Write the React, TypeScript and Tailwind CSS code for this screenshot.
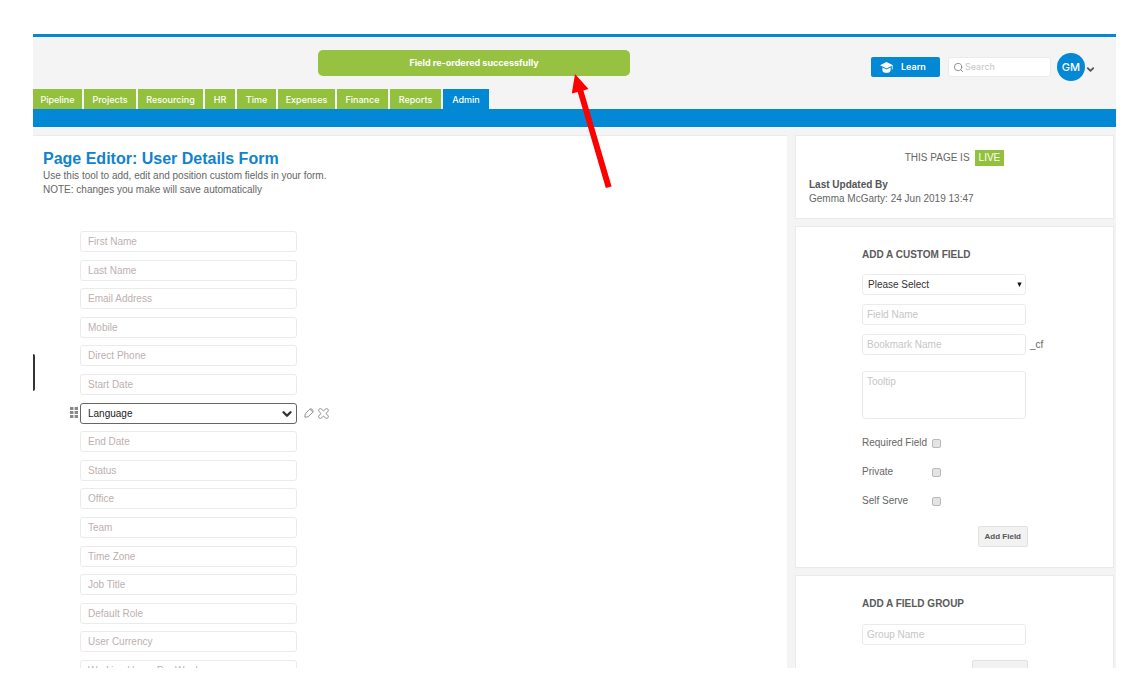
import { ChevronDown, Search } from "lucide-react";

const tabs = [
    { label: "Pipeline", width: "w-[49px]" },
    { label: "Projects", width: "w-[52px]" },
    { label: "Resourcing", width: "w-[65px]" },
    { label: "HR", width: "w-[30px]" },
    { label: "Time", width: "w-[39px]" },
    { label: "Expenses", width: "w-[57px]" },
    { label: "Finance", width: "w-[51px]" },
    { label: "Reports", width: "w-[51px]" },
    { label: "Admin", width: "w-[46px]", active: true },
];

const fields = [
    "First Name",
    "Last Name",
    "Email Address",
    "Mobile",
    "Direct Phone",
    "Start Date",
    "Language",
    "End Date",
    "Status",
    "Office",
    "Team",
    "Time Zone",
    "Job Title",
    "Default Role",
    "User Currency",
    "Working Hours Per Week",
];

const options = ["Required Field", "Private", "Self Serve"];

const inputClass =
    "block h-[21px] w-full rounded-[3px] border border-[#ebebeb] bg-white px-1 text-[10px] text-[#333] placeholder:text-[#c6c6c6] outline-none";

function GripIcon() {
    return (
        <svg width="8" height="12" viewBox="0 0 8 12" fill="#888">
            {[0, 4, 8].map((y) => (
                <g key={y}>
                    <rect x="0" y={y} width="3.4" height="3" />
                    <rect x="4.6" y={y} width="3.4" height="3" />
                </g>
            ))}
        </svg>
    );
}

function PencilIcon() {
    return (
        <svg width="10" height="10" viewBox="0 0 10 10" fill="none" stroke="#888" strokeWidth="0.9" strokeLinejoin="round">
            <path d="M0.8 9.2 1.2 5.9 5.6 1.3Q6.8 0.2 8.2 1.4L8.6 1.8Q9.8 3.2 8.7 4.4L4.1 8.8Z" />
            <path d="M5.6 1.3Q8 1.8 8.7 4.4" />
        </svg>
    );
}

function DeleteIcon() {
    return (
        <svg width="11" height="11" viewBox="0 0 11 11" fill="none" stroke="#888" strokeWidth="0.9" strokeLinejoin="round">
            <path d="M5.5 3.2 7.2 1.2Q8.6 0 9.9 1.1 11 2.4 9.8 3.8L7.8 5.5 9.8 7.2Q11 8.6 9.9 9.9 8.6 11 7.2 9.8L5.5 7.8 3.8 9.8Q2.4 11 1.1 9.9 0 8.6 1.2 7.2L3.2 5.5 1.2 3.8Q0 2.4 1.1 1.1 2.4 0 3.8 1.2Z" />
        </svg>
    );
}

function LearnIcon() {
    return (
        <svg width="13" height="11" viewBox="0 0 13 11" fill="#fff">
            <path d="M6.5 0 13 3.2 6.5 6.4 0 3.2Z" />
            <path d="M2.4 5.4 6.5 7.4 10.6 5.4V8.4Q10.2 10.8 6.5 10.8 2.8 10.8 2.4 8.4Z" />
            <path d="M11.8 3.6H12.6V7.4H11.8Z" />
        </svg>
    );
}

function Header() {
    return (
        <header className="shrink-0 border-t-[3px] border-[#0288d4] font-['Inter',sans-serif]">
            <div className="flex h-[52px] items-center pr-5">
                <div
                    role="status"
                    className="ml-[285px] flex h-[26px] w-[312px] items-center justify-center rounded-[5px] bg-[#97c140] text-[9px] font-bold text-white"
                >
                    Field re-ordered successfully
                </div>
                <div className="ml-auto flex items-center pt-2">
                    <button className="flex h-5 w-[69px] items-center gap-2 rounded-xs bg-[#0288d4] pl-[9px] text-[9px] font-semibold text-white">
                        <LearnIcon />
                        Learn
                    </button>
                    <label className="ml-2 flex h-5 w-[103px] items-center gap-px rounded-[3px] border border-[#ebebeb] bg-white pl-1">
                        <Search size={11} strokeWidth={2} className="shrink-0 text-[#888]" />
                        <input
                            type="text"
                            aria-label="Search"
                            placeholder="Search"
                            className="w-full min-w-0 text-[9px] outline-none placeholder:text-[#c6c6c6]"
                        />
                    </label>
                    <button className="ml-[6px] flex items-center">
                        <span className="flex size-7 items-center justify-center rounded-full bg-[#0288d4] text-[11px] font-medium text-white">
                            GM
                        </span>
                        <ChevronDown size={11} strokeWidth={4} className="mt-1 text-[#555]" />
                    </button>
                </div>
            </div>
            <nav className="flex h-5 gap-0.5">
                {tabs.map((tab) => (
                    <a
                        key={tab.label}
                        href="#"
                        className={`flex items-center justify-center pt-0.5 text-[9px] font-medium text-white ${tab.width} ${tab.active ? "bg-[#0288d4]" : "bg-[#93c13d]"}`}
                    >
                        {tab.label}
                    </a>
                ))}
            </nav>
            <div className="h-[18px] bg-[#0288d4]" />
        </header>
    );
}

function FieldRow({ name }: { name: string }) {
    if (name === "Language") {
        return (
            <li className="relative flex items-center">
                <button aria-label="Move field" className="absolute -left-[10px]">
                    <GripIcon />
                </button>
                <div className="relative w-[217px]">
                    <select
                        aria-label={name}
                        className="block h-[21px] w-full appearance-none rounded-[3px] border border-[#666] bg-white px-[7px] text-[10px] text-[#222] outline-none"
                    >
                        <option>{name}</option>
                    </select>
                    <ChevronDown
                        size={14}
                        strokeWidth={4}
                        className="pointer-events-none absolute top-1 right-[3px] text-[#333]"
                    />
                </div>
                <button aria-label="Edit field" className="ml-[7px]">
                    <PencilIcon />
                </button>
                <button aria-label="Delete field" className="ml-1">
                    <DeleteIcon />
                </button>
            </li>
        );
    }

    return (
        <li>
            <input
                type="text"
                aria-label={name}
                placeholder={name}
                className="block h-[21px] w-[217px] rounded-[3px] border border-[#ebebeb] bg-white px-[7px] text-[10px] outline-none placeholder:text-[#bdb0b0]"
            />
        </li>
    );
}

function Editor() {
    return (
        <main className="min-w-0 flex-1 border-t border-[#eaeaea] bg-white pt-[13px] pl-[10px]">
            <h1 className="text-[16px] leading-5 font-bold text-[#0f83cf]">Page Editor: User Details Form</h1>
            <p className="text-[10px] leading-[14px] text-[#666]">
                Use this tool to add, edit and position custom fields in your form.
                <br />
                NOTE: changes you make will save automatically
            </p>
            <ul className="mt-[34px] ml-[37px] flex h-[450px] flex-col justify-between">
                {fields.map((name) => (
                    <FieldRow key={name} name={name} />
                ))}
            </ul>
        </main>
    );
}

function Sidebar() {
    return (
        <aside className="flex w-[319px] shrink-0 flex-col gap-[7px] text-[10px] text-[#666]">
            <section className="border border-[#eaeaea] bg-white px-[13px] pt-[14px] pb-3">
                <div className="flex items-center justify-center gap-[5px] leading-4">
                    THIS PAGE IS
                    <span className="bg-[#93c13d] px-1 text-white">LIVE</span>
                </div>
                <h2 className="mt-3 leading-[14px] font-bold text-[#555]">Last Updated By</h2>
                <p className="leading-[14px]">Gemma McGarty: 24 Jun 2019 13:47</p>
            </section>

            <section className="border border-[#eaeaea] bg-white px-[66px] pt-5 pb-5">
                <h2 className="leading-4 font-bold text-[#5a5a5a]">ADD A CUSTOM FIELD</h2>
                <form className="mt-[11px]">
                    <div className="relative w-[164px]">
                        <select
                            aria-label="Field type"
                            className="block h-[21px] w-full appearance-none rounded-[3px] border border-[#ebebeb] bg-white px-[5px] text-[10px] text-[#333] outline-none"
                        >
                            <option>Please Select</option>
                        </select>
                        <svg
                            width="5"
                            height="5"
                            viewBox="0 0 5 5"
                            className="pointer-events-none absolute top-2 right-1"
                        >
                            <path d="M0.3 0.5H4.7L2.5 5Z" fill="#111" />
                        </svg>
                    </div>
                    <div className="mt-[9px] w-[164px]">
                        <input type="text" aria-label="Field Name" placeholder="Field Name" className={inputClass} />
                    </div>
                    <div className="mt-[9px] flex items-center gap-1">
                        <div className="w-[164px]">
                            <input
                                type="text"
                                aria-label="Bookmark Name"
                                placeholder="Bookmark Name"
                                className={inputClass}
                            />
                        </div>
                        <span>_cf</span>
                    </div>
                    <textarea
                        aria-label="Tooltip"
                        placeholder="Tooltip"
                        className="mt-4 block h-12 w-[164px] resize-none rounded-[3px] border border-[#ebebeb] px-1 py-[3px] text-[10px] leading-[14px] outline-none placeholder:text-[#c6c6c6]"
                    />
                    <div className="mt-[17px] flex flex-col gap-[15px]">
                        {options.map((option) => (
                            <label key={option} className="flex items-center leading-[14px]">
                                <span className="w-[70px]">{option}</span>
                                <input
                                    type="checkbox"
                                    className="size-[9px] appearance-none rounded-[2px] border border-[#b9b9b9] bg-[#e4e4e4]"
                                />
                            </label>
                        ))}
                    </div>
                    <div className="mt-[18px] flex w-[166px] justify-end">
                        <button
                            type="button"
                            className="h-[21px] rounded-xs border border-[#e2e2e2] bg-[#f2f2f2] px-1.5 text-[8px] font-bold text-[#555]"
                        >
                            Add Field
                        </button>
                    </div>
                </form>
            </section>

            <section className="border border-[#eaeaea] bg-white px-[66px] pt-5 pb-5">
                <h2 className="leading-4 font-bold text-[#5a5a5a]">ADD A FIELD GROUP</h2>
                <form className="mt-3 w-[164px]">
                    <input type="text" aria-label="Group Name" placeholder="Group Name" className={inputClass} />
                    <div className="mt-[15px] flex w-[166px] justify-end">
                        <button
                            type="button"
                            className="h-[21px] rounded-xs border border-[#e2e2e2] bg-[#f2f2f2] px-1.5 text-[8px] font-bold text-[#555]"
                        >
                            Add Group
                        </button>
                    </div>
                </form>
            </section>
        </aside>
    );
}

export default function App() {
    return (
        <div className="relative h-screen bg-white pt-[34px] pr-[11px] pb-[26px] pl-[33px] font-['Liberation_Sans',Arial,sans-serif]">
            <div className="flex h-full flex-col overflow-hidden bg-[#f4f4f4]">
                <Header />
                <div className="flex min-h-0 flex-1 gap-2 pt-2 pr-0.5">
                    <Editor />
                    <Sidebar />
                </div>
            </div>

            {/* Collapsed side panel handle */}
            <div className="absolute top-[354px] left-[33px] h-[37px] w-0.5 rounded-r-sm bg-[#333]" />

            {/* Arrow pointing at the success message */}
            <svg
                width="42"
                height="116"
                viewBox="0 0 42 116"
                className="pointer-events-none absolute top-[73px] left-[571px]"
            >
                <path d="M4 1 17.5 16 12.4 17.4 40.6 113.4 34.8 115 6.7 19 0.8 20.4Z" fill="#fe0000" />
            </svg>
        </div>
    );
}
